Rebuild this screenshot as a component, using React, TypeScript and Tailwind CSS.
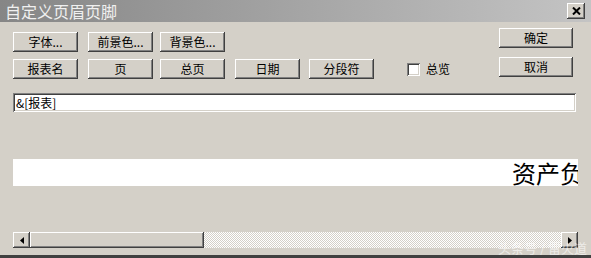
import React from "react";

const raised =
  "shadow-[inset_-1px_-1px_#404040,inset_1px_1px_#ffffff,inset_-2px_-2px_#808080,inset_2px_2px_#d4d0c8]";
const sunken =
  "shadow-[inset_1px_1px_#808080,inset_-1px_-1px_#ffffff,inset_2px_2px_#404040,inset_-2px_-2px_#d4d0c8]";

const Btn: React.FC<{ label: string; className?: string }> = ({ label, className = "" }) => (
  <button
    className={`h-[20px] flex items-center justify-center bg-[#d4d0c8] text-[12px] leading-none text-black ${raised} ${className}`}
  >
    {label}
  </button>
);

const Arrow: React.FC<{ dir: "left" | "right" }> = ({ dir }) => (
  <div className={`w-[17px] h-[16px] flex items-center justify-center bg-[#d4d0c8] ${raised}`}>
    <svg width="4" height="7" viewBox="0 0 4 7">
      {dir === "left" ? (
        <polygon points="4,0 4,7 0,3.5" fill="#000" />
      ) : (
        <polygon points="0,0 0,7 4,3.5" fill="#000" />
      )}
    </svg>
  </div>
);

export default function App() {
  return (
    <div
      className="relative w-[591px] h-[258px] bg-[#d4d0c8] flex flex-col overflow-hidden border-b-[3px] border-[#404040]"
      style={{ fontFamily: '"Noto Sans CJK SC", "Noto Sans", sans-serif' }}
    >
      {/* title bar */}
      <div className="h-[22px] shrink-0 flex items-center justify-between pl-[5px] pr-[6px] bg-gradient-to-r from-[#868686] to-[#c4c4c4]">
        <span className="text-[16px] leading-none text-[#f0f0f0]">自定义页眉页脚</span>
        <div className={`w-[18px] h-[16px] flex items-center justify-center bg-[#d4d0c8] ${raised}`}>
          <svg width="9" height="8" viewBox="0 0 9 8">
            <path d="M1 0.5 L8 7.5 M8 0.5 L1 7.5" stroke="#000" strokeWidth="2" />
          </svg>
        </div>
      </div>

      <div className="flex-1 flex flex-col pl-[13px] pr-[13px]">
        {/* buttons area */}
        <div className="flex pt-[6px]">
          <div className="flex-1 flex flex-col pt-[4px] gap-[7px]">
            <div className="flex">
              <Btn label="字体..." className="w-[65px]" />
              <Btn label="前景色..." className="w-[65px] ml-[10px]" />
              <Btn label="背景色..." className="w-[65px] ml-[7px]" />
            </div>
            <div className="flex items-center">
              <Btn label="报表名" className="w-[65px]" />
              <Btn label="页" className="w-[65px] ml-[10px]" />
              <Btn label="总页" className="w-[65px] ml-[7px]" />
              <Btn label="日期" className="w-[65px] ml-[10px]" />
              <Btn label="分段符" className="w-[65px] ml-[9px]" />
              <div className={`w-[13px] h-[13px] bg-white ml-[33px] ${sunken}`} />
              <span className="text-[12px] leading-none ml-[6px] text-black">总览</span>
            </div>
          </div>
          <div className="flex flex-col gap-[9px] mr-[5px]">
            <Btn label="确定" className="w-[74px]" />
            <Btn label="取消" className="w-[74px]" />
          </div>
        </div>

        {/* text field */}
        <div className={`mt-[14px] mr-[2px] h-[19px] bg-white flex items-center px-[3px] ${sunken}`}>
          <span className="text-[12px] leading-none text-black">&amp;[报表]</span>
        </div>

        {/* preview band */}
        <div className="mt-[47px] h-[27px] bg-white overflow-hidden flex items-center pl-[499px]">
          <span className="text-[24px] leading-none whitespace-nowrap text-black">资产负债表</span>
        </div>

        {/* scrollbar */}
        <div className="mt-[46px] h-[16px] flex">
          <Arrow dir="left" />
          <div className={`w-[174px] h-[16px] bg-[#d4d0c8] ${raised}`} />
          <div className="flex-1 bg-[repeating-conic-gradient(#ffffff_0_25%,#d4d0c8_0_50%)] bg-[length:2px_2px]" />
          <Arrow dir="right" />
        </div>
      </div>

      <span className="absolute right-[4px] bottom-[-2px] text-[13px] text-white/60 whitespace-nowrap">
        头条号 / 雷火道
      </span>
    </div>
  );
}
